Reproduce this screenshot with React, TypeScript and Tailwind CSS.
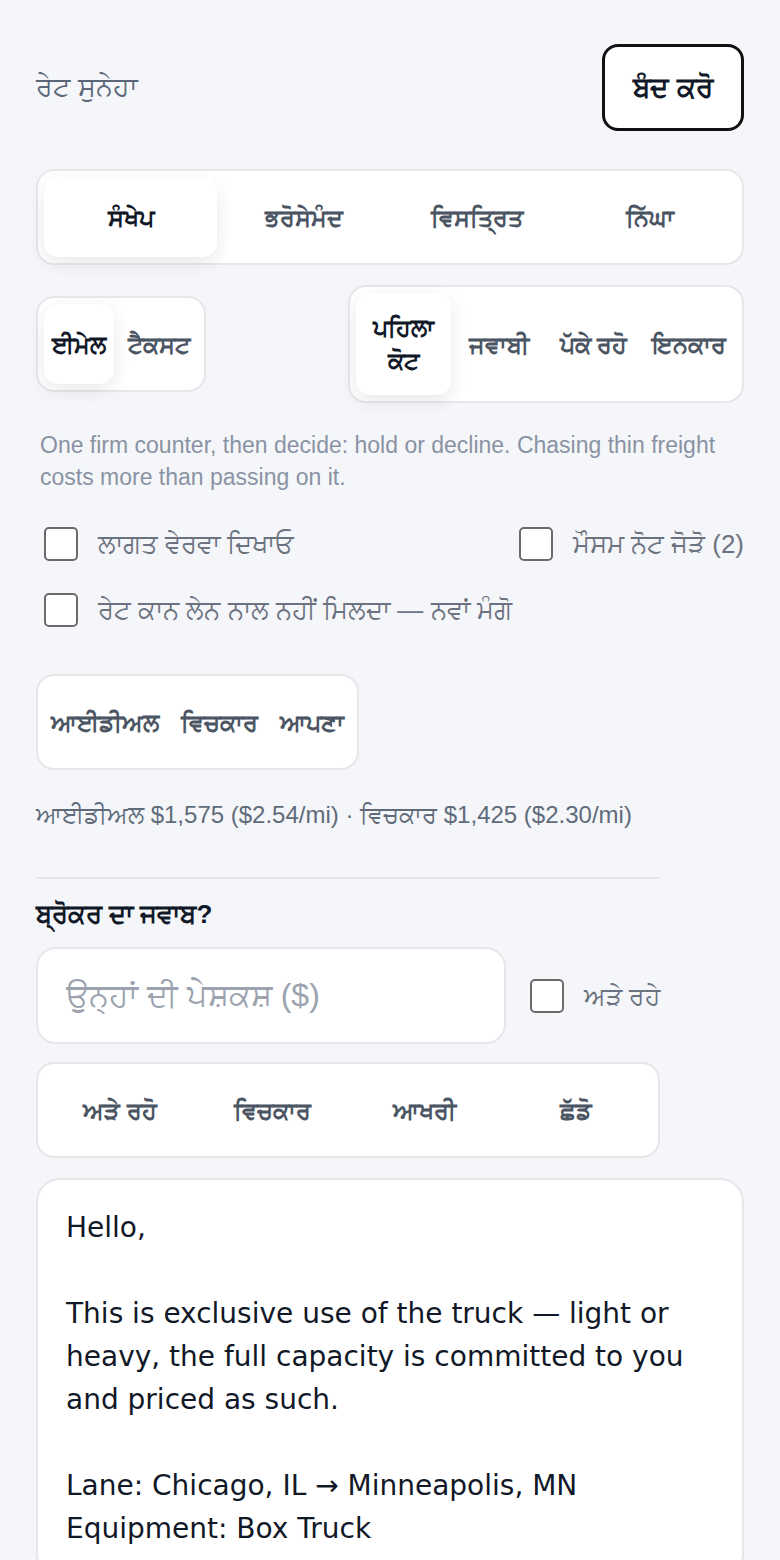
import { useState } from "react";

const TONES = ["ਸੰਖੇਪ", "ਭਰੋਸੇਮੰਦ", "ਵਿਸਤ੍ਰਿਤ", "ਨਿੱਘਾ"];
const CHANNELS = ["ਈਮੇਲ", "ਟੈਕਸਟ"];
const STAGES = ["ਪਹਿਲਾ ਕੋਟ", "ਜਵਾਬੀ", "ਪੱਕੇ ਰਹੋ", "ਇਨਕਾਰ"];
const ANCHORS = ["ਆਈਡੀਅਲ", "ਵਿਚਕਾਰ", "ਆਪਣਾ"];
const REPLIES = ["ਅੜੇ ਰਹੋ", "ਵਿਚਕਾਰ", "ਆਖਰੀ", "ਛੱਡੋ"];

const MESSAGE = `Hello,

This is exclusive use of the truck — light or heavy, the full capacity is committed to you and priced as such.

Lane: Chicago, IL → Minneapolis, MN
Equipment: Box Truck`;

function Box({
  label,
  checked,
  onChange,
  small,
}: {
  label: string;
  checked: boolean;
  onChange: () => void;
  small?: boolean;
}) {
  return (
    <label className="flex items-center gap-5 cursor-pointer">
      <span
        onClick={onChange}
        className={`w-[34px] h-[34px] shrink-0 rounded-[5px] border-2 border-[#6b6b6b] ${
          checked ? "bg-[#1f2937]" : "bg-white"
        }`}
      />
      <span className={`${small ? "text-[25px]" : "text-[26px]"} text-[#6b7280] leading-[34px]`}>{label}</span>
    </label>
  );
}

export default function App() {
  const [tone, setTone] = useState(0);
  const [channel, setChannel] = useState(0);
  const [stage, setStage] = useState(0);
  const [anchor, setAnchor] = useState<number | null>(null);
  const [reply, setReply] = useState<number | null>(null);
  const [checks, setChecks] = useState([false, false, false, false]);

  const toggle = (i: number) => setChecks((c) => c.map((v, j) => (j === i ? !v : v)));

  const seg = (active: boolean) =>
    `flex items-center justify-center text-center rounded-[14px] text-[24px] leading-[33px] font-semibold ${
      active ? "bg-white text-[#111827] shadow-[0_6px_18px_rgba(0,0,0,0.09)]" : "text-[#4b5563]"
    }`;

  return (
    <div
      className="min-h-screen bg-[#f5f6f9] px-9 pt-11 pb-10"
      style={{ fontFamily: '"Liberation Sans", Arial, sans-serif' }}
    >
      {/* Header */}
      <header className="flex items-center justify-between">
        <h1 className="text-[27px] text-[#5b6778]">ਰੇਟ ਸੁਨੇਹਾ</h1>
        <button className="h-[87px] w-[142px] rounded-[16px] border-[3px] border-[#111] bg-white text-[28px] font-bold text-[#111827]">
          ਬੰਦ ਕਰੋ
        </button>
      </header>

      {/* Tone */}
      <div className="mt-[38px] flex rounded-[18px] border-2 border-[#e6e7ea] bg-white p-[6px]">
        {TONES.map((t, i) => (
          <button key={t} onClick={() => setTone(i)} className={`${seg(tone === i)} flex-1 h-[80px]`}>
            {t}
          </button>
        ))}
      </div>

      {/* Channel + stage */}
      <div className="mt-[20px] flex items-center justify-between">
        <div className="flex gap-[6px] rounded-[18px] border-2 border-[#e6e7ea] bg-white p-[6px]">
          {CHANNELS.map((c, i) => (
            <button key={c} onClick={() => setChannel(i)} className={`${seg(channel === i)} h-[80px] px-[8px]`}>
              {c}
            </button>
          ))}
        </div>
        <div className="flex w-[396px] rounded-[18px] border-2 border-[#e6e7ea] bg-white p-[6px]">
          {STAGES.map((s, i) => (
            <button
              key={s}
              onClick={() => setStage(i)}
              className={`${seg(stage === i)} flex-1 basis-0 min-h-[80px] px-[8px] py-[18px]`}
            >
              {s}
            </button>
          ))}
        </div>
      </div>

      <p className="mt-[26px] px-1 text-[23px] leading-[32px] text-[#8a93a3]">
        One firm counter, then decide: hold or decline. Chasing thin freight costs more than passing on it.
      </p>

      {/* Options */}
      <div className="mt-[34px] flex flex-col gap-[32px] pl-2">
        <div className="flex items-center justify-between">
          <Box label="ਲਾਗਤ ਵੇਰਵਾ ਦਿਖਾਓ" checked={checks[0]} onChange={() => toggle(0)} />
          <Box label="ਮੌਸਮ ਨੋਟ ਜੋੜੋ (2)" checked={checks[1]} onChange={() => toggle(1)} />
        </div>
        <Box label="ਰੇਟ ਕਾਨ ਲੇਨ ਨਾਲ ਨਹੀਂ ਮਿਲਦਾ — ਨਵਾਂ ਮੰਗੋ" checked={checks[2]} onChange={() => toggle(2)} />
      </div>

      {/* Anchor */}
      <div className="mt-[47px] inline-flex gap-[8px] rounded-[18px] border-2 border-[#e6e7ea] bg-white p-[6px]">
        {ANCHORS.map((a, i) => (
          <button key={a} onClick={() => setAnchor(i)} className={`${seg(anchor === i)} h-[80px] px-[7px]`}>
            {a}
          </button>
        ))}
      </div>

      <p className="mt-[29px] text-[24px] leading-[32px] text-[#5f6b7a]">
        ਆਈਡੀਅਲ $1,575 ($2.54/mi) · ਵਿਚਕਾਰ $1,425 ($2.30/mi)
      </p>

      {/* Broker reply */}
      <div className="w-[624px]">
        <div className="mt-[46px] h-[2px] bg-[#e2e4e8]" />
        <h2 className="mt-[18px] text-[26px] leading-[34px] font-bold text-[#111827]">ਬ੍ਰੋਕਰ ਦਾ ਜਵਾਬ?</h2>
        <div className="mt-[16px] flex items-center gap-[24px]">
          <input
            placeholder="ਉਨ੍ਹਾਂ ਦੀ ਪੇਸ਼ਕਸ਼ ($)"
            className="h-[97px] w-[470px] rounded-[20px] border-2 border-[#e6e7ea] bg-white px-[28px] text-[32px] text-[#111827] placeholder-[#9ca3af] outline-none"
          />
          <Box label="ਅੜੇ ਰਹੇ" small checked={checks[3]} onChange={() => toggle(3)} />
        </div>
        <div className="mt-[18px] flex rounded-[18px] border-2 border-[#e6e7ea] bg-white p-[6px]">
          {REPLIES.map((r, i) => (
            <button key={r} onClick={() => setReply(i)} className={`${seg(reply === i)} flex-1 h-[80px]`}>
              {r}
            </button>
          ))}
        </div>
      </div>

      {/* Message */}
      <div
        className="mt-[20px] rounded-[24px] border-2 border-[#e6e7ea] bg-white px-[28px] py-[26px] text-[28px] leading-[43px] text-[#111827] whitespace-pre-wrap"
        style={{ fontFamily: '"DejaVu Sans", sans-serif' }}
      >
        {MESSAGE}
      </div>
    </div>
  );
}
